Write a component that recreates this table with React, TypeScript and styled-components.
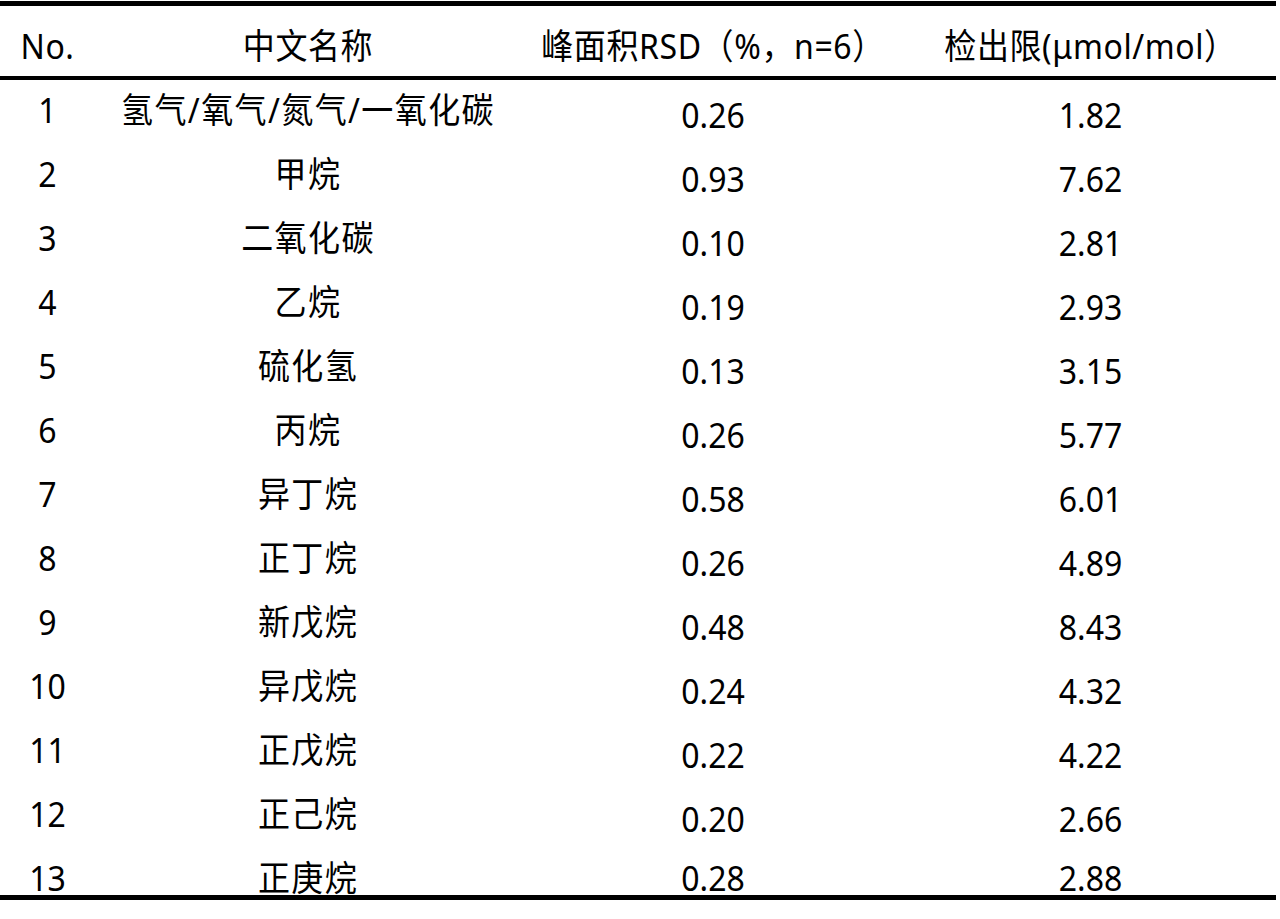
import React from "react";
import styled, { createGlobalStyle } from "styled-components";

const GlobalStyle = createGlobalStyle`
  html, body {
    margin: 0;
    padding: 0;
    background: #ffffff;
  }
  body {
    font-family: "Noto Sans", "Noto Sans CJK SC", sans-serif;
    color: #000;
  }
`;

const Table = styled.div`
  width: 1276px;
  padding-top: 1px;
  display: flex;
  flex-direction: column;
`;

const HeaderRow = styled.div`
  display: grid;
  grid-template-columns: 95px 426px 384px 371px;
  height: 70px;
  border-top: 5px solid #000;
  border-bottom: 4px solid #000;
  align-items: center;
`;

const Body = styled.div`
  display: flex;
  flex-direction: column;
  border-bottom: 5px solid #000;
`;

const Row = styled.div<{ $last?: boolean }>`
  display: grid;
  grid-template-columns: 95px 426px 384px 371px;
  height: ${(p) => (p.$last ? "47px" : "64px")};
  align-items: start;
`;

const HeadCell = styled.div`
  text-align: center;
  font-size: 32px;
  line-height: 40px;
  padding-top: 8px;
  letter-spacing: 0.6px;
  white-space: nowrap;
  transform: scaleY(1.1);
`;

const Cell = styled.div<{ $num?: boolean; $name?: boolean; $last?: boolean }>`
  text-align: center;
  font-size: 32px;
  line-height: 64px;
  margin-top: ${(p) => (p.$num ? (p.$last ? "-2px" : "3px") : "-2px")};
  letter-spacing: ${(p) => (p.$name ? "1.4px" : "0")};
  white-space: nowrap;
  transform: scaleY(1.1);
`;

const rows: [string, string, string, string][] = [
  ["1", "氢气/氧气/氮气/一氧化碳", "0.26", "1.82"],
  ["2", "甲烷", "0.93", "7.62"],
  ["3", "二氧化碳", "0.10", "2.81"],
  ["4", "乙烷", "0.19", "2.93"],
  ["5", "硫化氢", "0.13", "3.15"],
  ["6", "丙烷", "0.26", "5.77"],
  ["7", "异丁烷", "0.58", "6.01"],
  ["8", "正丁烷", "0.26", "4.89"],
  ["9", "新戊烷", "0.48", "8.43"],
  ["10", "异戊烷", "0.24", "4.32"],
  ["11", "正戊烷", "0.22", "4.22"],
  ["12", "正己烷", "0.20", "2.66"],
  ["13", "正庚烷", "0.28", "2.88"],
];

export default function App() {
  return (
    <>
      <GlobalStyle />
      <Table>
        <HeaderRow>
          <HeadCell>No.</HeadCell>
          <HeadCell>中文名称</HeadCell>
          <HeadCell>峰面积RSD（%，n=6）</HeadCell>
          <HeadCell>检出限(μmol/mol）</HeadCell>
        </HeaderRow>
        <Body>
          {rows.map((r, i) => {
            const last = i === rows.length - 1;
            return (
              <Row key={r[0]} $last={last}>
                <Cell>{r[0]}</Cell>
                <Cell $name>{r[1]}</Cell>
                <Cell $num $last={last}>{r[2]}</Cell>
                <Cell $num $last={last}>{r[3]}</Cell>
              </Row>
            );
          })}
        </Body>
      </Table>
    </>
  );
}
